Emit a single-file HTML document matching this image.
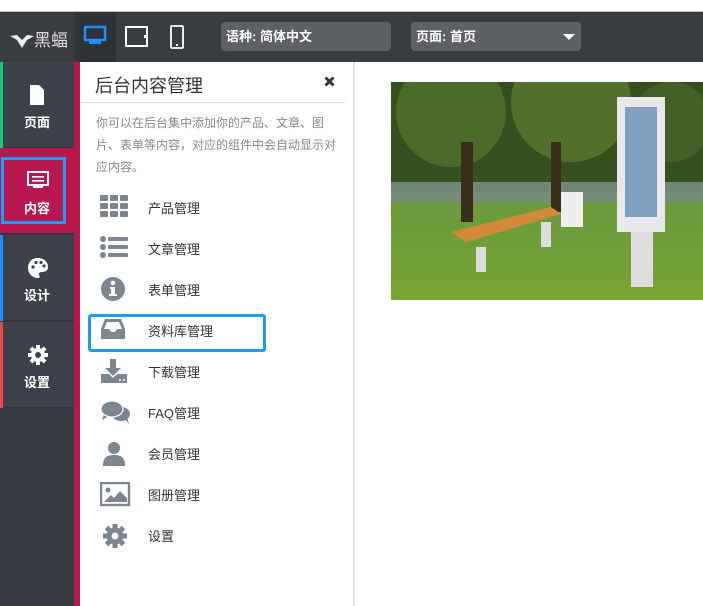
<!DOCTYPE html>
<html><head><meta charset="utf-8"><style>
*{margin:0;padding:0;box-sizing:border-box}
body{width:703px;height:606px;overflow:hidden;background:#fff;font-family:"Liberation Sans","Noto Sans CJK SC",sans-serif;position:relative}
.top{position:absolute;left:0;top:11px;width:703px;height:1px;background:#bbb}
.bar{position:absolute;left:0;top:12px;width:703px;height:50px;background:#393d42}
.logo{position:absolute;left:10px;top:14px;color:#ddd;font-size:17px}
.dev{position:absolute;top:0;height:50px;width:41px}
.sel{position:absolute;top:10px;height:29px;background:#5d6064;border-radius:4px;color:#fff;font-size:13px;font-weight:bold;line-height:29px;padding-left:5px}
.side{position:absolute;left:0;top:62px;width:74px;height:544px;background:#363a42}
.crim{position:absolute;left:74px;top:62px;width:6px;height:544px;background:#b8174f}
.it{position:absolute;left:0;width:74px;height:86px;background:#3d414c;border-bottom:1px solid #30333a;color:#fff;font-size:13px;font-weight:bold;text-align:center}
.it .lb{position:absolute;left:0;width:74px;top:50px}
.it svg{position:absolute;left:27px;top:22px}
.acc{position:absolute;left:0;top:0;width:3px;height:86px}
.panel{position:absolute;left:80px;top:62px;width:275px;height:544px;background:#fff;border-right:2px solid #e3e3e3}
.ttl{position:absolute;left:15px;top:10px;font-size:18px;color:#333}
.x{position:absolute;left:244px;top:14px}
.hr{position:absolute;left:0;top:40px;width:265px;height:1px;background:#ddd}
.desc{position:absolute;left:16px;top:50px;width:250px;font-size:12px;line-height:22px;color:#888}
.row{position:absolute;left:0;width:275px;height:41px}
.row svg{position:absolute;left:20px;top:8px}
.row span{position:absolute;left:68px;top:11px;font-size:13px;color:#333}
.box{position:absolute;left:8px;top:252px;width:178px;height:38px;border:3px solid #1e9bff;border-radius:3px}
</style></head><body>
<div class="top"></div>
<div class="bar">
 <div class="logo"><svg width="24" height="16" viewBox="0 0 24 16" style="vertical-align:-2px"><path d="M0 4 L7 3 L12 8 L17 3 L24 4 L17 8 L12 16 L7 8Z" fill="#eee"/></svg>黑蝠</div>
 <div class="dev" style="left:75px;background:#2f3237"><svg width="41" height="50"><rect x="10" y="15" width="20" height="13" fill="none" stroke="#1e8fff" stroke-width="2.5"/><rect x="14" y="29" width="12" height="3" fill="#1e8fff"/></svg></div>
 <div class="dev" style="left:116px"><svg width="41" height="50"><rect x="10" y="15" width="21" height="19" fill="none" stroke="#fff" stroke-width="2"/><rect x="28" y="23" width="2" height="3" fill="#fff"/></svg></div>
 <div class="dev" style="left:157px"><svg width="41" height="50"><rect x="14" y="14" width="12" height="22" rx="1" fill="none" stroke="#fff" stroke-width="1.8"/><rect x="19" y="32" width="2" height="2" fill="#fff"/></svg></div>
 <div class="sel" style="left:221px;width:170px">语种: 简体中文</div>
 <div class="sel" style="left:411px;width:170px">页面: 首页<svg width="12" height="7" style="position:absolute;left:152px;top:12px"><path d="M0 0H12L6 6Z" fill="#fff"/></svg></div>
</div>
<div class="side">
 <div class="it" style="top:0"><div class="acc" style="background:#1cc779"></div><svg width="20" height="22" viewBox="0 0 20 22"><path d="M3 1H12L17 6V21H3Z" fill="#fff"/></svg><div class="lb">页面</div></div>
 <div class="it" style="top:86px;background:#b8174f"><div style="position:absolute;left:1px;top:9px;width:65px;height:67px;border:3px solid #1e9bff"></div><svg width="22" height="20" viewBox="0 0 22 20"><rect x="1" y="2" width="20" height="13" fill="none" stroke="#fff" stroke-width="2"/><rect x="5" y="6" width="12" height="1.6" fill="#fff"/><rect x="5" y="10" width="12" height="1.6" fill="#fff"/><rect x="6" y="16" width="10" height="2" fill="#fff"/></svg><div class="lb">内容</div></div>
 <div class="it" style="top:173px"><div class="acc" style="background:#1e8fff"></div><svg width="22" height="22" viewBox="0 0 22 22"><path d="M11 1C4 1 1 6 1 11C1 17 6 21 11 21C13 21 13 19 12 18C11 16 13 15 15 15C19 15 21 13 21 10C21 5 17 1 11 1Z" fill="#fff"/><circle cx="6" cy="10" r="1.6" fill="#3d414c"/><circle cx="9" cy="5.5" r="1.6" fill="#3d414c"/><circle cx="14" cy="5.5" r="1.6" fill="#3d414c"/><circle cx="17" cy="9" r="1.6" fill="#3d414c"/></svg><div class="lb">设计</div></div>
 <div class="it" style="top:260px"><div class="acc" style="background:#f04848"></div><svg width="22" height="22" viewBox="0 0 22 22"><g fill="#fff"><circle cx="11" cy="11" r="7"/><rect x="9" y="1" width="4" height="20"/><rect x="1" y="9" width="20" height="4"/><rect x="9" y="1" width="4" height="20" transform="rotate(45 11 11)"/><rect x="9" y="1" width="4" height="20" transform="rotate(-45 11 11)"/></g><circle cx="11" cy="11" r="3" fill="#3d414c"/></svg><div class="lb">设置</div></div>
</div>
<div class="crim"></div>
<div class="panel">
 <div class="ttl">后台内容管理</div><svg class="x" width="11" height="11"><path d="M1.5 1.5L9.5 9.5M9.5 1.5L1.5 9.5" stroke="#333" stroke-width="2.8"/></svg>
 <div class="hr"></div>
 <div class="desc">你可以在后台集中添加你的产品、文章、图片、表单等内容，对应的组件中会自动显示对应内容。</div>
 <div class="row" style="top:125px"><svg width="30" height="24" viewBox="0 0 30 24"><g fill="#7d8590"><rect x="0" y="0" width="8" height="6" rx="1"/><rect x="10" y="0" width="8" height="6" rx="1"/><rect x="20" y="0" width="8" height="6" rx="1"/><rect x="0" y="8" width="8" height="6" rx="1"/><rect x="10" y="8" width="8" height="6" rx="1"/><rect x="20" y="8" width="8" height="6" rx="1"/><rect x="0" y="16" width="8" height="6" rx="1"/><rect x="10" y="16" width="8" height="6" rx="1"/><rect x="20" y="16" width="8" height="6" rx="1"/></g></svg><span>产品管理</span></div>
 <div class="row" style="top:166px"><svg width="30" height="24" viewBox="0 0 30 24"><g fill="#7d8590"><circle cx="3" cy="3" r="3"/><circle cx="3" cy="11" r="3"/><circle cx="3" cy="19" r="3"/><rect x="8" y="1" width="20" height="4" rx="1"/><rect x="8" y="9" width="20" height="4" rx="1"/><rect x="8" y="17" width="20" height="4" rx="1"/></g></svg><span>文章管理</span></div>
 <div class="row" style="top:207px"><svg width="30" height="26" viewBox="0 0 30 26"><circle cx="13" cy="12" r="12" fill="#7d8590"/><circle cx="13" cy="6" r="2.3" fill="#fff"/><path d="M10 10H15V17H17V19H9V17H11V12H10Z" fill="#fff"/></svg><span>表单管理</span></div>
 <div class="row" style="top:248px"><svg width="30" height="24" viewBox="0 0 30 24"><path d="M1 11L5 1H21L25 11V21H1Z" fill="#7d8590"/><path d="M4 11L7 4H19L22 11H17L15 14H11L9 11Z" fill="#fff"/></svg><span>资料库管理</span></div>
 <div class="box"></div>
 <div class="row" style="top:289px"><svg width="30" height="26" viewBox="0 0 30 26"><g fill="#7d8590"><rect x="10" y="0" width="6" height="9"/><path d="M5 9H21L13 17Z"/><path d="M1 15H9L13 19L17 15H27V24H1Z"/></g><circle cx="20" cy="21" r="1" fill="#fff"/><circle cx="24" cy="21" r="1" fill="#fff"/></svg><span>下载管理</span></div>
 <div class="row" style="top:330px"><svg width="32" height="26" viewBox="0 0 32 26"><g fill="#7d8590"><ellipse cx="12" cy="9" rx="11" ry="8"/><path d="M4 14L2 20L9 16Z"/><ellipse cx="21" cy="14" rx="9" ry="7"/><path d="M25 19L29 24L27 17Z"/></g><ellipse cx="12" cy="9" rx="11" ry="8" fill="#7d8590" stroke="#fff" stroke-width="1.2"/></svg><span>FAQ管理</span></div>
 <div class="row" style="top:371px"><svg width="30" height="26" viewBox="0 0 30 26"><g fill="#7d8590"><circle cx="14" cy="7" r="6"/><path d="M3 25C3 16 7 14 14 14C21 14 25 16 25 25Z"/></g></svg><span>会员管理</span></div>
 <div class="row" style="top:412px"><svg width="32" height="26" viewBox="0 0 32 26"><rect x="1" y="1" width="28" height="22" fill="none" stroke="#7d8590" stroke-width="2.4"/><circle cx="8" cy="8" r="2.5" fill="#7d8590"/><path d="M4 20L11 13L14 16L20 9L27 16V20Z" fill="#7d8590"/></svg><span>图册管理</span></div>
 <div class="row" style="top:453px"><svg width="30" height="26" viewBox="0 0 26 26"><g fill="#7d8590"><circle cx="13" cy="13" r="8.5"/><rect x="10.5" y="1" width="5" height="24"/><rect x="1" y="10.5" width="24" height="5"/><rect x="10.5" y="1" width="5" height="24" transform="rotate(45 13 13)"/><rect x="10.5" y="1" width="5" height="24" transform="rotate(-45 13 13)"/></g><circle cx="13" cy="13" r="3.5" fill="#fff"/></svg><span>设置</span></div>
</div>
<svg style="position:absolute;left:391px;top:82px" width="312" height="218" viewBox="0 0 312 218">
 <defs><linearGradient id="g" x1="0" y1="0" x2="0" y2="1"><stop offset="0" stop-color="#6a9a3e"/><stop offset="1" stop-color="#78a434"/></linearGradient></defs>
 <rect width="312" height="218" fill="#3f5a26"/>
 <rect y="120" width="312" height="98" fill="url(#g)"/>
 <rect x="0" y="0" width="312" height="110" fill="#35501f"/>
 <circle cx="60" cy="30" r="55" fill="#4a6a2a"/><circle cx="180" cy="20" r="60" fill="#52702c"/><circle cx="280" cy="40" r="40" fill="#465f28"/>
 <rect x="0" y="100" width="312" height="20" fill="#a9c0c8" opacity=".5"/>
 <rect x="70" y="60" width="12" height="80" fill="#3a2d1c"/><rect x="160" y="60" width="10" height="70" fill="#3a2d1c"/>
 <path d="M60 150L160 125L170 132L75 160Z" fill="#d28a3a"/><rect x="85" y="165" width="10" height="25" fill="#ddd"/><rect x="150" y="140" width="10" height="25" fill="#ddd"/>
 <rect x="170" y="110" width="22" height="35" fill="#eee"/>
 <rect x="226" y="15" width="48" height="135" fill="#e8e8ea"/><rect x="234" y="25" width="32" height="110" fill="#7fa0c0"/><rect x="240" y="150" width="22" height="55" fill="#ddd"/>
</svg>
</body></html>
